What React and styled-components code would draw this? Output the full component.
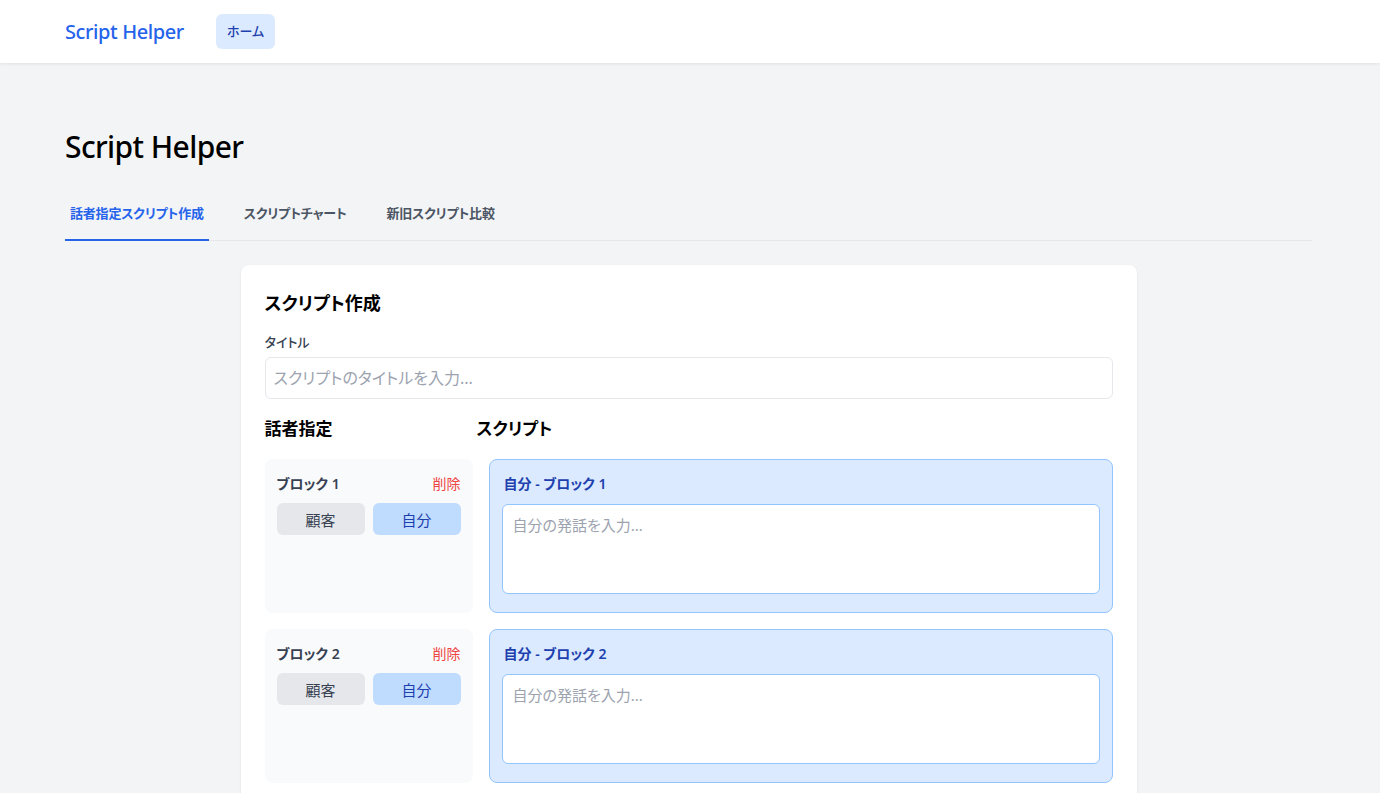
import React, { useState } from "react";
import styled, { createGlobalStyle } from "styled-components";

const GlobalStyle = createGlobalStyle`
  * { box-sizing: border-box; }
  html, body {
    margin: 0;
    padding: 0;
    background: #f3f4f6;
    font-family: "Noto Sans", "Noto Sans CJK JP", sans-serif;
    font-feature-settings: "palt";
    color: #111827;
  }
  textarea, input, button {
    font-family: inherit;
    font-feature-settings: "palt";
  }
`;

const NavBar = styled.nav`
  background: #fff;
  height: 63px;
  box-shadow: 0 1px 3px rgba(0, 0, 0, 0.08);
  display: flex;
  align-items: center;
  padding: 0 65px;
  gap: 32px;
`;

const Logo = styled.div`
  font-size: 20px;
  font-weight: 500;
  letter-spacing: -0.4px;
  color: #2563eb;
`;

const NavButton = styled.button`
  border: none;
  background: #dbeafe;
  color: #1e40af;
  font-size: 13px;
  font-weight: 500;
  line-height: 19px;
  padding: 8px 11px;
  border-radius: 6px;
`;

const Main = styled.main`
  padding: 66px 68px 40px 65px;
`;

const PageTitle = styled.h1`
  margin: 0 0 22px;
  font-size: 30px;
  line-height: 36px;
  font-weight: 500;
  letter-spacing: -0.6px;
  color: #000;
`;

const TabBar = styled.div`
  display: flex;
  gap: 30px;
  border-bottom: 1px solid #e5e7eb;
`;

const Tab = styled.button`
  border: none;
  background: none;
  padding: 16px 5px 16px;
  font-size: 13px;
  line-height: 20px;
  font-weight: 600;
  letter-spacing: -0.2px;
  color: ${(p) => (p.$active ? "#2563eb" : "#4b5563")};
  border-bottom: 2px solid ${(p) => (p.$active ? "#2563eb" : "transparent")};
  margin-bottom: -1px;
  cursor: pointer;
`;

const Card = styled.section`
  width: 896px;
  margin: 24px auto 0;
  background: #fff;
  border-radius: 8px;
  box-shadow: 0 1px 3px rgba(0, 0, 0, 0.08);
  padding: 24px;
`;

const CardTitle = styled.h2`
  margin: 0 0 15px;
  font-size: 18px;
  line-height: 28px;
  font-weight: 700;
  color: #000;
`;

const Label = styled.label`
  display: block;
  font-size: 13px;
  line-height: 20px;
  font-weight: 500;
  color: #374151;
  margin-bottom: 5px;
`;

const TitleInput = styled.input`
  display: block;
  width: 100%;
  height: 42px;
  border: 1px solid #e5e7eb;
  border-radius: 6px;
  padding: 8px;
  font-size: 16px;
  outline: none;
  &::placeholder { color: #9ca3af; }
`;

const ColumnHeads = styled.div`
  display: grid;
  grid-template-columns: 212px 1fr;
  margin: 16px 0 16px;
`;

const ColumnHead = styled.h3`
  margin: 0;
  font-size: 17px;
  line-height: 28px;
  font-weight: 700;
  color: #000;
`;

const BlockList = styled.div`
  display: flex;
  flex-direction: column;
  gap: 16px;
`;

const BlockRow = styled.div`
  display: grid;
  grid-template-columns: 208px 1fr;
  gap: 16px;
`;

const SpeakerPanel = styled.div`
  background: #f9fafb;
  border-radius: 8px;
  padding: 12px;
`;

const SpeakerHead = styled.div`
  display: flex;
  justify-content: space-between;
  align-items: center;
  height: 24px;
  margin-bottom: 8px;
`;

const BlockName = styled.span`
  font-size: 14px;
  font-weight: 600;
  color: #374151;
`;

const DeleteButton = styled.button`
  border: none;
  background: none;
  padding: 0;
  font-size: 14px;
  color: #ef4444;
  cursor: pointer;
`;

const SpeakerButtons = styled.div`
  display: grid;
  grid-template-columns: 1fr 1fr;
  gap: 8px;
`;

const SpeakerButton = styled.button`
  border: none;
  border-radius: 6px;
  height: 32px;
  font-size: 15px;
  background: ${(p) => (p.$selected ? "#bfdbfe" : "#e5e7eb")};
  color: ${(p) => (p.$selected ? "#1e40af" : "#374151")};
  cursor: pointer;
`;

const ScriptPanel = styled.div`
  background: #dbeafe;
  border: 1px solid #93c5fd;
  border-radius: 8px;
  padding: 12px 12px 18px;
`;

const ScriptTitle = styled.div`
  font-size: 14px;
  line-height: 24px;
  font-weight: 600;
  color: #1e40af;
  margin-bottom: 8px;
  padding-left: 2px;
`;

const ScriptArea = styled.textarea`
  display: block;
  width: 100%;
  height: 90px;
  resize: none;
  border: 1px solid #93c5fd;
  border-radius: 6px;
  padding: 10px;
  font-size: 15px;
  line-height: 20px;
  outline: none;
  &::placeholder { color: #9ca3af; }
`;

const tabs = ["話者指定スクリプト作成", "スクリプトチャート", "新旧スクリプト比較"];

export default function App() {
  const [activeTab, setActiveTab] = useState(0);
  const [blocks, setBlocks] = useState([
    { id: 1, speaker: "self", text: "" },
    { id: 2, speaker: "self", text: "" },
  ]);

  const setSpeaker = (id, speaker) =>
    setBlocks(blocks.map((b) => (b.id === id ? { ...b, speaker } : b)));
  const removeBlock = (id) => setBlocks(blocks.filter((b) => b.id !== id));

  return (
    <>
      <GlobalStyle />
      <NavBar>
        <Logo>Script Helper</Logo>
        <NavButton>ホーム</NavButton>
      </NavBar>
      <Main>
        <PageTitle>Script Helper</PageTitle>
        <TabBar>
          {tabs.map((t, i) => (
            <Tab key={t} $active={i === activeTab} onClick={() => setActiveTab(i)}>
              {t}
            </Tab>
          ))}
        </TabBar>
        <Card>
          <CardTitle>スクリプト作成</CardTitle>
          <Label>タイトル</Label>
          <TitleInput placeholder="スクリプトのタイトルを入力..." />
          <ColumnHeads>
            <ColumnHead>話者指定</ColumnHead>
            <ColumnHead>スクリプト</ColumnHead>
          </ColumnHeads>
          <BlockList>
            {blocks.map((b, i) => {
              const who = b.speaker === "self" ? "自分" : "顧客";
              return (
                <BlockRow key={b.id}>
                  <SpeakerPanel>
                    <SpeakerHead>
                      <BlockName>ブロック {i + 1}</BlockName>
                      <DeleteButton onClick={() => removeBlock(b.id)}>削除</DeleteButton>
                    </SpeakerHead>
                    <SpeakerButtons>
                      <SpeakerButton
                        $selected={b.speaker === "customer"}
                        onClick={() => setSpeaker(b.id, "customer")}
                      >
                        顧客
                      </SpeakerButton>
                      <SpeakerButton
                        $selected={b.speaker === "self"}
                        onClick={() => setSpeaker(b.id, "self")}
                      >
                        自分
                      </SpeakerButton>
                    </SpeakerButtons>
                  </SpeakerPanel>
                  <ScriptPanel>
                    <ScriptTitle>
                      {who} - ブロック {i + 1}
                    </ScriptTitle>
                    <ScriptArea placeholder={`${who}の発話を入力...`} />
                  </ScriptPanel>
                </BlockRow>
              );
            })}
          </BlockList>
        </Card>
      </Main>
    </>
  );
}
